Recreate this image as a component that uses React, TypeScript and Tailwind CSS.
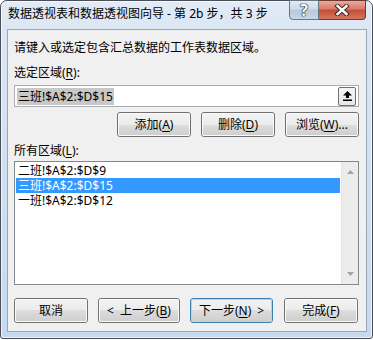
import React from "react";

const F = "font-['Noto_Sans','Noto_Sans_CJK_SC',sans-serif]";

function Btn({
  children,
  w,
  def,
}: {
  children: React.ReactNode;
  w: string;
  def?: boolean;
}) {
  return (
    <div
      className={`h-[25px] ${w} shrink-0 rounded-[3px] border ${
        def ? "border-[#3c7fb1]" : "border-[#707070]"
      }`}
    >
      <div
        className={`flex h-full w-full items-center justify-center rounded-[2px] border ${
          def ? "border-[#9fdcf7]" : "border-[#fbfbfb]"
        } bg-[linear-gradient(#f2f2f2,#ebebeb_50%,#dddddd_50%,#cfcfcf)] text-[12px] leading-[16px] text-black`}
      >
        {children}
      </div>
    </div>
  );
}

function U({ children }: { children: React.ReactNode }) {
  return <span className="underline underline-offset-2">{children}</span>;
}

export default function App() {
  return (
    <div className={`h-[340px] w-[373px] bg-white ${F}`}>
      <div className="relative flex h-[339px] w-[373px] flex-col rounded-t-[7px] rounded-b-[3px] border border-[#4a4f57] bg-[linear-gradient(180deg,#e2ebf6_0%,#dae6f4_10%,#c6d9ee_100%)] shadow-[inset_0_0_0_1px_rgba(255,255,255,0.7)]">
        {/* title bar */}
        <div className="h-[28px] shrink-0 pl-[7px] pt-[5px] text-[12px] leading-[16px] text-black">
          数据透视表和数据透视图向导 - 第 2b 步，共 3 步
        </div>
        {/* caption buttons */}
        <div className="absolute left-[288px] top-[-1px] flex h-[20px]">
          <div className="flex h-[20px] w-[30px] items-center justify-center rounded-bl-[4px] border border-[#6b7684] bg-[linear-gradient(#e3ebf4,#cfdbe8_45%,#b8c8da_50%,#c9d7e6)]">
            <span className="text-[16px] font-bold leading-[16px] text-white [text-shadow:0_0_1px_#222,0_0_1px_#222,0_0_1px_#222,0_0_1px_#222]">
              ?
            </span>
          </div>
          <div className="flex h-[20px] w-[47px] items-center justify-center rounded-br-[4px] border border-l-0 border-[#6b3a32] bg-[linear-gradient(#e9a99c,#d97a68_45%,#c44c35_50%,#d5765d)]">
            <svg width="16" height="12" viewBox="0 0 16 12">
              <path d="M3.5 2 L12.5 10 M12.5 2 L3.5 10" stroke="#3a2a28" strokeWidth="4.4" strokeLinecap="square" />
              <path d="M3.5 2 L12.5 10 M12.5 2 L3.5 10" stroke="#ffffff" strokeWidth="2.4" strokeLinecap="square" />
            </svg>
          </div>
        </div>

        {/* content */}
        <div className="ml-[6px] flex h-[303px] w-[360px] flex-col border border-[#97a6b8] bg-[#f0f0f0] pl-[6px] pr-[7px] pt-[10px] text-[12px] leading-[16px] text-black">
          <div>请键入或选定包含汇总数据的工作表数据区域。</div>
          <div className="mt-[9px]">
            选定区域(<U>R</U>):
          </div>
          {/* input */}
          <div className="mt-[4px] flex h-[22px] w-[345px] items-center justify-between border border-[#abadb3] bg-white pl-[2px] pr-[2px]">
            <span className="bg-[#c8c8c8] px-px leading-[17px]">三班!$A$2:$D$15</span>
            <div className="flex h-[19px] w-[18px] items-center justify-center rounded-[2px] border border-[#707070] bg-[linear-gradient(#f6f6f6,#e6e6e6)]">
              <svg width="9" height="10" viewBox="0 0 9 10">
                <path d="M4.5 0 L9 4.5 L6 4.5 L6 7 L3 7 L3 4.5 L0 4.5 Z" fill="#000" />
                <rect x="0" y="8.5" width="9" height="1.5" fill="#000" />
              </svg>
            </div>
          </div>
          {/* row buttons */}
          <div className="mt-[5px] flex justify-end gap-[10px]">
            <Btn w="w-[74px]">
              添加(<U>A</U>)
            </Btn>
            <Btn w="w-[74px]">
              删除(<U>D</U>)
            </Btn>
            <Btn w="w-[74px]">
              浏览(<U>W</U>)...
            </Btn>
          </div>
          <div className="mt-[6px]">
            所有区域(<U>L</U>):
          </div>
          {/* list */}
          <div className="mt-[2px] flex h-[124px] w-[345px] border border-[#828790] bg-white">
            <div className="flex-1 p-px">
              <div className="flex h-[15px] items-center overflow-hidden pl-[2px] leading-[14px]">二班!$A$2:$D$9</div>
              <div className="flex h-[15px] items-center overflow-hidden bg-[#3399ff] pl-[2px] leading-[14px] text-white">三班!$A$2:$D$15</div>
              <div className="flex h-[15px] items-center overflow-hidden pl-[2px] leading-[14px]">一班!$A$2:$D$12</div>
            </div>
            <div className="flex w-[17px] flex-col items-center justify-between border-l border-[#e3e3e3] bg-[#ececec] py-[8px]">
              <svg width="7" height="4" viewBox="0 0 7 4">
                <path d="M3.5 0 L7 4 L0 4 Z" fill="#a3a3a3" />
              </svg>
              <svg width="7" height="4" viewBox="0 0 7 4">
                <path d="M0 0 L7 0 L3.5 4 Z" fill="#a3a3a3" />
              </svg>
            </div>
          </div>
          {/* bottom buttons */}
          <div className="mt-[13px] flex">
            <Btn w="w-[74px]">取消</Btn>
            <div className="w-[10px]" />
            <Btn w="w-[82px]">
              <span className="mr-[6px]">&lt;</span>上一步(<U>B</U>)
            </Btn>
            <div className="w-[10px]" />
            <Btn w="w-[83px]" def>
              下一步(<U>N</U>)<span className="ml-[6px]">&gt;</span>
            </Btn>
            <div className="w-[11px]" />
            <Btn w="w-[74px]">
              完成(<U>F</U>)
            </Btn>
          </div>
        </div>
      </div>
    </div>
  );
}
